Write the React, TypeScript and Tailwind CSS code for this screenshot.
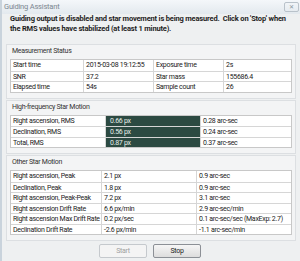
import React from "react";

type Cell = { text: string; dark?: boolean };

const font = '"Roboto", "Liberation Sans", sans-serif';

function Grid({ rows, cols }: { rows: Cell[][]; cols: string }) {
  return (
    <div className="border border-[#c8c8c8] bg-white">
      {rows.map((row, i) => (
        <div
          key={i}
          className={`grid ${cols} h-[10.5px] ${i > 0 ? "border-t border-[#d6d6d6]" : ""}`}
        >
          {row.map((c, j) => (
            <div
              key={j}
              className={`pl-[2px] leading-[10px] whitespace-nowrap overflow-hidden ${
                j > 0 ? "border-l border-[#d6d6d6]" : ""
              } ${c.dark ? "bg-[#2c4a42] text-[#e6eeea] pl-[4px]" : "text-[#222]"}`}
            >
              {c.text}
            </div>
          ))}
        </div>
      ))}
    </div>
  );
}

function Group({ title, children }: { title: string; children: React.ReactNode }) {
  return (
    <div className="mx-[4px] border border-[#dcdfe2] bg-[#f3f4f5] px-[3px] pt-[1px] pb-[5px]">
      <div className="h-[10px] leading-[10px] pl-[2px] text-[#333] mb-[3px]">{title}</div>
      {children}
    </div>
  );
}

export default function App() {
  const status: Cell[][] = [
    [{ text: "Start time" }, { text: "2015-03-08 19:12:55" }, { text: "Exposure time" }, { text: "2s" }],
    [{ text: "SNR" }, { text: "37.2" }, { text: "Star mass" }, { text: "155686.4" }],
    [{ text: "Elapsed time" }, { text: "54s" }, { text: "Sample count" }, { text: "26" }],
  ];
  const hf: Cell[][] = [
    [{ text: "Right ascension, RMS" }, { text: "0.66 px", dark: true }, { text: "0.28 arc-sec" }],
    [{ text: "Declination, RMS" }, { text: "0.56 px", dark: true }, { text: "0.24 arc-sec" }],
    [{ text: "Total, RMS" }, { text: "0.87 px", dark: true }, { text: "0.37 arc-sec" }],
  ];
  const other: Cell[][] = [
    [{ text: "Right ascension, Peak" }, { text: "2.1 px" }, { text: "0.9 arc-sec" }],
    [{ text: "Declination, Peak" }, { text: "1.8 px" }, { text: "0.9 arc-sec" }],
    [{ text: "Right ascension, Peak-Peak" }, { text: "7.2 px" }, { text: "3.1 arc-sec" }],
    [{ text: "Right ascension Drift Rate" }, { text: "6.6 px/min" }, { text: "2.9 arc-sec/min" }],
    [{ text: "Right ascension Max Drift Rate" }, { text: "0.2 px/sec" }, { text: "0.1 arc-sec/sec (MaxExp: 2.7)" }],
    [{ text: "Declination Drift Rate" }, { text: "-2.6 px/min" }, { text: "-1.1 arc-sec/min" }],
  ];

  return (
    <div
      className="w-[300px] h-[261px] overflow-hidden bg-[#eef0f1] text-[7px] tracking-[-0.3px] flex flex-col border-l-[2px] border-[#c9d3dc]"
      style={{ fontFamily: font }}
    >
      {/* title bar */}
      <div className="h-[14px] shrink-0 flex items-center justify-between bg-gradient-to-b from-[#f4f7fa] to-[#e3e9ee] pl-[2px] pr-[1px]">
        <span className="text-[#7b8790] text-[7.5px] tracking-[-0.2px]">Guiding Assistant</span>
        <div className="w-[15px] h-[10px] border border-[#b9c2ca] rounded-[2px] flex items-center justify-center text-[#8a959e] text-[6px] leading-none">
          ✕
        </div>
      </div>

      {/* message */}
      <div className="h-[20px] shrink-0 pl-[8px] font-bold text-[#1e1e1e] leading-[10px] text-[7.5px] tracking-[-0.18px] whitespace-nowrap">
        Guiding output is disabled and star movement is being measured.&nbsp; Click on 'Stop' when
        <br />
        the RMS values have stabilized (at least 1 minute).
      </div>

      <div className="mt-[10px] flex flex-col gap-[1px]">
        <Group title="Measurement Status">
          <Grid rows={status} cols="grid-cols-[72px_70px_70px_1fr]" />
        </Group>
        <Group title="High-frequency Star Motion">
          <Grid rows={hf} cols="grid-cols-[94px_95px_1fr]" />
        </Group>
        <Group title="Other Star Motion">
          <Grid rows={other} cols="grid-cols-[90px_95px_1fr]" />
        </Group>
      </div>

      {/* buttons */}
      <div className="flex justify-center gap-[6px] mt-[3px] pr-[2px]">
        <div className="w-[48px] h-[14px] border border-[#c5c9cd] rounded-[2px] bg-[#f4f4f4] text-[#a0a0a0] flex items-center justify-center">
          Start
        </div>
        <div className="w-[48px] h-[14px] border border-[#8c9096] rounded-[2px] bg-gradient-to-b from-[#f6f6f6] to-[#dddddd] text-[#222] flex items-center justify-center">
          Stop
        </div>
      </div>
    </div>
  );
}
